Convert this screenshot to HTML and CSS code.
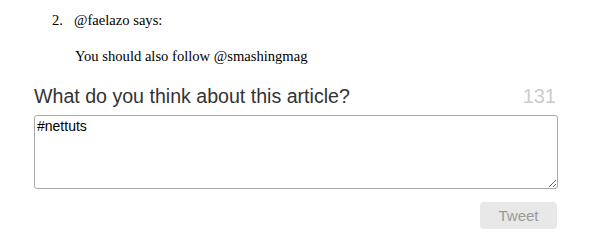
FILE: index.html
```html
<!DOCTYPE html>
<html lang="en">
<head>
    <meta charset="UTF-8">
    <title>Comments</title>
    <link rel="stylesheet" href="styles.css">
</head>
<body>
    <div class="page">
        <div class="comment">
            <span class="comment-num">2.</span>
            <div class="comment-body">
                <div class="comment-author">@faelazo says:</div>
                <p>You should also follow @smashingmag</p>
            </div>
        </div>

        <form class="tweet-box" onsubmit="return false">
            <div class="tweet-head">
                <label for="tweet-text">What do you think about this article?</label>
                <span class="counter" id="counter">131</span>
            </div>
            <textarea id="tweet-text">#nettuts</textarea>
            <div class="actions">
                <button class="btn" type="submit" disabled>Tweet</button>
            </div>
        </form>
    </div>
</body>
</html>
```

FILE: styles.css
```css
body {
    margin: 0;
    padding: 0;
    background: #fff;
    font-family: "Liberation Sans", Arial, sans-serif;
}
.page {
    width: 524px;
    padding: 13px 0 0 34px;
}
/* Comment list */
.comment {
    display: flex;
    font-family: "Liberation Serif", "Times New Roman", serif;
    font-size: 14.6px;
    line-height: 15px;
    color: #000;
}
.comment-num {
    width: 22px;
    margin-left: 18px;
}
.comment-body p {
    margin: 21px 0 0 1px;
}
/* Tweet form */
.tweet-box {
    margin-top: 21px;
}
.tweet-head {
    display: flex;
    justify-content: space-between;
    align-items: baseline;
    height: 22px;
    padding-right: 2px;
}
.tweet-head label {
    font-size: 19.6px;
    line-height: 22px;
    color: #333;
}
.counter {
    font-size: 20px;
    line-height: 22px;
    color: #ccc;
}
textarea {
    display: block;
    box-sizing: border-box;
    width: 524px;
    height: 74px;
    margin-top: 8px;
    padding: 2px;
    border: 1px solid #a9a9a9;
    border-radius: 3px;
    font-family: "Liberation Sans", Arial, sans-serif;
    font-size: 14px;
    color: #000;
}
.actions {
    display: flex;
    justify-content: flex-end;
    margin-top: 13px;
    padding-right: 1px;
}
.btn {
    width: 77px;
    height: 27px;
    padding: 0;
    border: none;
    border-radius: 4px;
    background: #e8e8e8;
    color: #999;
    font-family: "Liberation Sans", Arial, sans-serif;
    font-size: 15px;
}
```
